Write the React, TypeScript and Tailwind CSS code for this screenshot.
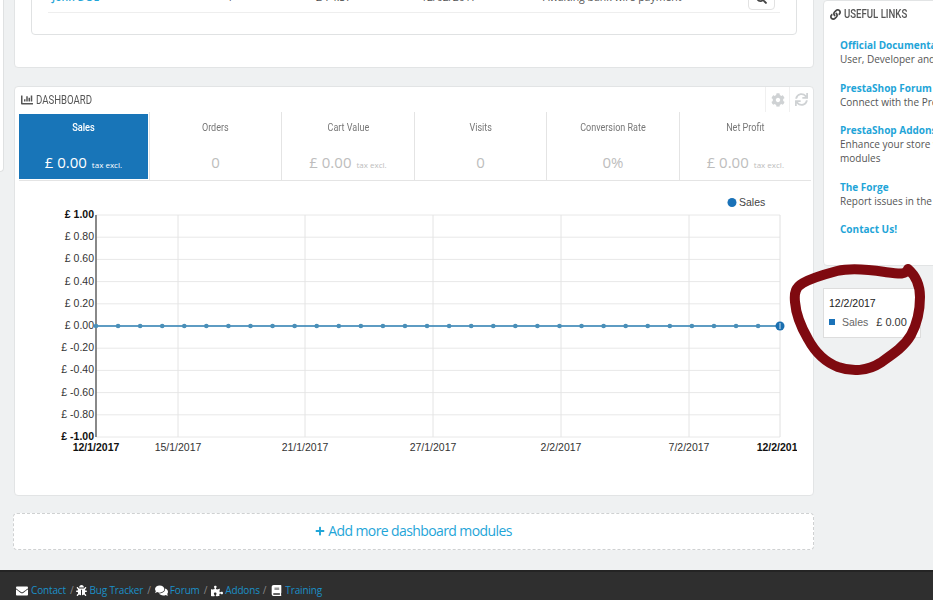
import { FaBook, FaBug, FaChartBar, FaCog, FaComments, FaEnvelope, FaLink, FaPlus, FaPuzzlePiece, FaSearch, FaSync } from 'react-icons/fa'

const TABS = [
  { label: 'Orders', value: '0' },
  { label: 'Cart Value', value: '£ 0.00', tax: true },
  { label: 'Visits', value: '0' },
  { label: 'Conversion Rate', value: '0%' },
  { label: 'Net Profit', value: '£ 0.00', tax: true },
]

const LINKS = [
  { title: 'Official Documentation', text: ['User, Developer and Designer Guides'], gap: 'mt-[29px]' },
  { title: 'PrestaShop Forum', text: ['Connect with the PrestaShop community'], gap: 'mt-[15px]' },
  { title: 'PrestaShop Addons', text: ['Enhance your store with templates & modules', 'modules'], gap: 'mt-[14px]' },
  { title: 'The Forge', text: ['Report issues in the Bug Tracker'], gap: 'mt-[15px]' },
]

const Y_LABELS = ['£ 1.00', '£ 0.80', '£ 0.60', '£ 0.40', '£ 0.20', '£ 0.00', '£ -0.20', '£ -0.40', '£ -0.60', '£ -0.80', '£ -1.00']
const X_LABELS = [
  { x: 178, label: '15/1/2017' },
  { x: 305, label: '21/1/2017' },
  { x: 433, label: '27/1/2017' },
  { x: 561, label: '2/2/2017' },
  { x: 689, label: '7/2/2017' },
]

function Chart() {
  const rowH = 22.2
  return (
    <svg viewBox="15 181 782 313" className="block w-[782px] h-[313px] font-['Liberation_Sans',sans-serif]">
      {Y_LABELS.map((label, i) => (
        <line key={label} x1={96} x2={780} y1={215 + i * rowH} y2={215 + i * rowH} stroke="#e8e8e8" />
      ))}
      {X_LABELS.map(t => (
        <line key={t.x} x1={t.x} x2={t.x} y1={215} y2={437} stroke="#e4e4e4" />
      ))}
      <line x1={780} x2={780} y1={215} y2={437} stroke="#e0e0e0" />
      <line x1={96} x2={96} y1={215} y2={437} stroke="#6b6b6b" strokeWidth={1.6} />
      <line x1={96} x2={780} y1={326} y2={326} stroke="#2d7fb3" strokeWidth={1.6} />
      {Array.from({ length: 31 }, (_, i) => (
        <circle key={i} cx={96 + i * 22.07} cy={326} r={2.3} fill="#4a8fb8" />
      ))}
      <circle cx={780} cy={326} r={4.5} fill="#1a6fb0" />
      <line x1={780} x2={780} y1={323} y2={329} stroke="#cfe3f2" />
      {Y_LABELS.map((label, i) => (
        <text
          key={label}
          x={94}
          y={218 + i * rowH}
          textAnchor="end"
          fontSize={10.5}
          fontWeight={i === 0 || i === 10 ? 700 : 400}
          fill={i === 0 || i === 10 ? '#111' : '#333'}
        >
          {label}
        </text>
      ))}
      <text x={96} y={451} textAnchor="middle" fontSize={10.5} fontWeight={700} fill="#111">12/1/2017</text>
      {X_LABELS.map(t => (
        <text key={t.x} x={t.x} y={451} textAnchor="middle" fontSize={10.5} fill="#333">{t.label}</text>
      ))}
      <text x={780} y={451} textAnchor="middle" fontSize={10.5} fontWeight={700} fill="#111">12/2/2017</text>
      <circle cx={732} cy={202.5} r={4.5} fill="#1a72b8" />
      <text x={739} y={206} fontSize={10.5} fill="#444">Sales</text>
    </svg>
  )
}

export default function App() {
  return (
    <div className="relative w-[933px] h-[600px] overflow-hidden flex flex-col bg-[#eff1f2] font-['Open_Sans',sans-serif] text-[#555]">
      <div className="flex h-[570px] overflow-hidden items-start">
        {/* Sidebar stub */}
        <div className="w-[4px] h-[172px] shrink-0 bg-white border-r border-b border-[#dfe1e2] rounded-br" />

        {/* Main column */}
        <div className="w-[800px] ml-[10px] shrink-0 -mt-[40px] flex flex-col">
          <div className="h-[108px] bg-white border border-[#e2e4e5] rounded pt-[10px] px-[16px]">
            <div className="h-[64px] border border-[#e0e2e3] rounded px-[16px]">
              <div className="flex h-[41px] border-b border-[#eeeeee] text-[10.5px] text-[#555]">
                <span className="w-[179px] pl-1 pt-[18px] font-semibold text-[#1fa5d8]">John DOE</span>
                <span className="w-[89px] pt-[18px]">1</span>
                <span className="w-[105px] pt-[18px]">£ 74.37</span>
                <span className="w-[122px] pt-[18px]">12/02/2017</span>
                <span className="w-[205px] pt-[18px] whitespace-nowrap">Awaiting bank wire payment</span>
                <span className="w-[27px] h-[28px] mt-[10px] bg-white border border-[#e2e2e2] rounded flex items-end justify-center pb-[5px] text-[#444]">
                  <FaSearch size={11} />
                </span>
              </div>
            </div>
          </div>

          <div className="mt-[18px] h-[410px] bg-white border border-[#e2e4e5] rounded">
            <div className="h-[25px] flex items-center pl-[6px] text-[#555]">
              <FaChartBar size={12} className="mr-[3px]" />
              <span className="text-[12px] font-['Roboto',sans-serif] scale-x-[.8] origin-left">DASHBOARD</span>
              <span className="ml-auto w-[24px] h-[25px] flex items-center justify-center border-l border-[#f0f0f0] text-[#cfd2d4]">
                <FaCog size={14} />
              </span>
              <span className="w-[23px] mr-[1px] h-[25px] flex items-center justify-center border-l border-[#f0f0f0] text-[#cfd2d4]">
                <FaSync size={13} />
              </span>
            </div>

            <div className="flex h-[69px] ml-[4px] w-[792px] border-b border-[#e4e4e4]">
              <div className="w-[129px] mr-[1px] my-[2px] h-[65px] bg-[#1875b8] text-white flex flex-col items-center">
                <span className="mt-[6px] text-[11px] font-['Roboto',sans-serif] font-medium scale-x-[.84]">Sales</span>
                <span className="mt-[14px] text-[15px] whitespace-nowrap">
                  £ 0.00 <span className="text-[8px] ml-[1px]">tax excl.</span>
                </span>
              </div>
              {TABS.map(tab => (
                <div key={tab.label} className="w-[132.6px] flex flex-col items-center border-l border-[#e4e4e4]">
                  <span className="mt-[8px] text-[11px] text-[#777] font-['Roboto',sans-serif] scale-x-[.82] whitespace-nowrap">{tab.label}</span>
                  <span className="mt-[14px] text-[15px] text-[#bdbdbd] whitespace-nowrap">
                    {tab.value}
                    {tab.tax && <span className="text-[8px] ml-[5px]">tax excl.</span>}
                  </span>
                </div>
              ))}
            </div>

            <Chart />
          </div>

          <div className="mt-[17px] -ml-px w-[801px] h-[37px] pb-[2px] bg-white border border-dashed border-[#cfd1d2] rounded flex items-center justify-center text-[#1fa5d8] text-[14px] tracking-[-0.6px]">
            <FaPlus size={10} className="mr-[3px]" />
            Add more dashboard modules
          </div>
        </div>

        {/* Useful links */}
        <div className="w-[120px] ml-[9px] shrink-0 h-[266px] bg-white border border-[#e2e4e5] rounded overflow-hidden">
          <div className="h-[26px] flex items-center pl-[6px] text-[#555] whitespace-nowrap">
            <FaLink size={11} className="mr-[3px] text-[#444]" />
            <span className="text-[12px] font-['Roboto',sans-serif] font-medium scale-x-[.8] origin-left">USEFUL LINKS</span>
          </div>
          <div className="pl-[16px] -mt-[18px] text-[10px] leading-[14px] whitespace-nowrap">
            {LINKS.map(link => (
              <div key={link.title} className={link.gap}>
                <div className="font-bold text-[#1fa5d8]">{link.title}</div>
                {link.text.map(line => (
                  <div key={line}>{line}</div>
                ))}
              </div>
            ))}
            <div className="mt-[14px] font-bold text-[#1fa5d8]">Contact Us!</div>
          </div>
        </div>
      </div>

      {/* Footer */}
      <div className="h-[30px] bg-[#2f2f2f] border-t-2 border-[#242424] flex items-end pb-[2px] pl-[16px] text-[10px] tracking-[-0.15px] text-[#8a8a8a] whitespace-nowrap">
        <FaEnvelope size={12} className="text-white mr-[3px] mb-[1px]" />
        <span className="text-[#1b8fc8]">Contact</span>
        <span className="ml-[4px] mr-[3px]">/</span>
        <FaBug size={11} className="text-white mr-[2px] mb-[2px]" />
        <span className="text-[#1b8fc8]">Bug Tracker</span>
        <span className="ml-[4px] mr-[4px]">/</span>
        <FaComments size={13} className="text-white mr-[2px] mb-[1px]" />
        <span className="text-[#1b8fc8]">Forum</span>
        <span className="ml-[4px] mr-[4px]">/</span>
        <FaPuzzlePiece size={12} className="text-white mr-[2px] mb-[1px]" />
        <span className="text-[#1b8fc8]">Addons</span>
        <span className="ml-[3px] mr-[5px]">/</span>
        <FaBook size={11} className="text-white mr-[3px] mb-[2px]" />
        <span className="text-[#1b8fc8]">Training</span>
      </div>

      {/* Chart tooltip */}
      <div className="absolute left-[823px] top-[288px] w-[98px] h-[50px] bg-white border border-[#dddddd] pl-[5px] pt-[7px] font-['Liberation_Sans',sans-serif] text-[10.5px] leading-[14px]">
        <div className="text-[#222]">12/2/2017</div>
        <div className="mt-[5px] flex items-center text-[#666]">
          <span className="w-[6px] h-[6px] bg-[#1a72b8] mr-[7px]" />
          Sales
          <span className="ml-[8px] text-[11px] text-[#333]">£ 0.00</span>
        </div>
      </div>

      {/* Red marker scribble */}
      <svg viewBox="0 0 933 600" className="absolute inset-0 w-[933px] h-[600px] pointer-events-none blur-[0.7px]">
        <path
          d="M908 269C906 275 900 274 885 272C865 269 850 268 837 271C822 275 810 279 803 283C796 287 794 292 795 302C796 315 801 327 808 339C815 352 825 362 838 367C852 372 868 371 880 363C893 354 904 347 911 335C918 322 920 310 920 297C920 284 916 276 908 269"
          fill="none"
          stroke="#7f0a10"
          strokeWidth={10}
          strokeLinecap="round"
          strokeLinejoin="round"
        />
      </svg>
    </div>
  )
}
